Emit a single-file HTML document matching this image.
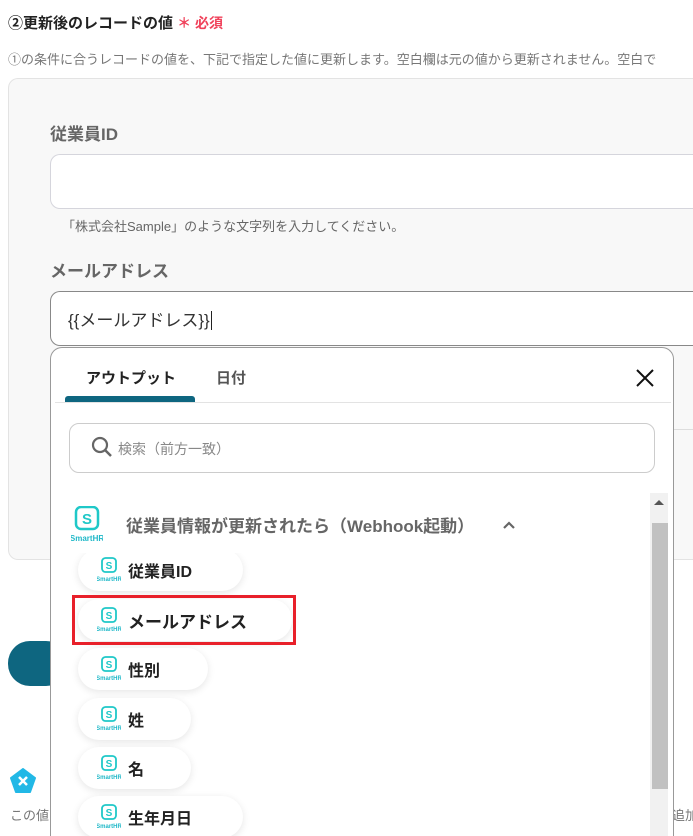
<!DOCTYPE html>
<html style="width:693px;height:836px;overflow:hidden"><head><meta charset="utf-8"><style>
*{box-sizing:border-box;margin:0;padding:0}
body{width:693px;height:836px;overflow:hidden;background:#fff;font-family:"Liberation Sans","Noto Sans CJK JP",sans-serif;position:relative}
.a{position:absolute;white-space:nowrap}
.chip{position:absolute;left:78px;height:42px;background:#fff;border-radius:21px;box-shadow:0 2px 8px rgba(0,0,0,.1);}
.chip .t{position:absolute;left:50px;top:9px;font-size:16px;font-weight:bold;color:#222}
.si{position:absolute;left:19px;top:8px;width:24px;height:26px}
</style></head><body>
<div class="a" style="left:8px;top:12px;font-size:15px;font-weight:bold;color:#222">②更新後のレコードの値 <span style="color:#f0415a;font-size:14px">＊ 必須</span></div>
<div class="a" style="left:8px;top:49px;width:685px;overflow:hidden;font-size:13px;color:#777">①の条件に合うレコードの値を、下記で指定した値に更新します。空白欄は元の値から更新されません。空白で</div>
<div class="a" style="left:8px;top:78px;width:685px;height:482px;background:#f8f8f8;border:1px solid #e3e3e3;border-right:none;border-radius:10px 0 0 10px"></div>
<div class="a" style="left:50px;top:120px;font-size:17px;font-weight:bold;color:#666">従業員ID</div>
<div class="a" style="left:50px;top:154px;width:643px;height:55px;background:#fff;border:1px solid #d5d5dc;border-right:none;border-radius:10px 0 0 10px"></div>
<div class="a" style="left:62px;top:216px;font-size:13px;color:#666">「株式会社Sample」のような文字列を入力してください。</div>
<div class="a" style="left:50px;top:257px;font-size:17px;font-weight:bold;color:#666">メールアドレス</div>
<div class="a" style="left:50px;top:291px;width:643px;height:55px;background:#fff;border:1px solid #888;border-right:none;border-radius:10px 0 0 10px"></div>
<div class="a" style="left:68px;top:306px;font-size:17px;color:#333">{{メールアドレス}}<span style="border-left:1px solid #222;margin-left:1px"></span></div>
<div class="a" style="left:674px;top:429px;width:19px;border-top:1px solid #ddd"></div>
<div class="a" style="left:8px;top:641px;width:60px;height:45px;background:#0e6680;border-radius:22px"></div>
<svg class="a" style="left:10px;top:768px" width="26" height="26" viewBox="0 0 26 26"><polygon points="13,1 25,10 20,24 6,24 1,10" fill="#22b8e6" stroke="#22b8e6" stroke-linejoin="round" stroke-width="2"/><path d="M9 9l8 8M17 9l-8 8" stroke="#fff" stroke-width="2.5"/></svg>
<div class="a" style="left:10px;top:805px;font-size:13px;color:#777">この値</div>
<div class="a" style="left:672px;top:805px;width:21px;overflow:hidden;font-size:13px;color:#777">追加</div>
<div class="a" style="left:50px;top:347px;width:624px;height:489px;background:#fff;border:1px solid #999;border-bottom:none;border-radius:12px 12px 0 0;overflow:hidden">
 <div class="a" style="left:35px;top:19px;font-size:15px;font-weight:bold;color:#222">アウトプット</div>
 <div class="a" style="left:165px;top:19px;font-size:15px;font-weight:bold;color:#555">日付</div>
 <div class="a" style="left:14px;top:48px;width:130px;height:6px;background:#0e6680;border-radius:3px 3px 0 0"></div>
 <div class="a" style="left:4px;top:54px;width:616px;border-top:1px solid #e3e3e3"></div>
 <svg class="a" style="left:584px;top:20px" width="20" height="20" viewBox="0 0 20 20"><path d="M2 2l16 16M18 2L2 18" stroke="#111" stroke-width="2"/></svg>
 <div class="a" style="left:18px;top:75px;width:586px;height:50px;border:1px solid #ccc;border-radius:10px"></div>
 <svg class="a" style="left:40px;top:88px" width="22" height="22" viewBox="0 0 22 22"><circle cx="9" cy="9" r="7" fill="none" stroke="#666" stroke-width="2.2"/><path d="M14 14l6 6" stroke="#666" stroke-width="2.5"/></svg>
 <div class="a" style="left:67px;top:91px;font-size:14px;color:#888">検索（前方一致）</div>
 <svg class="a" style="left:20px;top:158px" width="32" height="38" viewBox="0 0 32 38"><rect x="5" y="1" width="22" height="22" rx="5" fill="none" stroke="#1fc8c8" stroke-width="2.5"/><text x="16" y="18" font-size="15" font-weight="bold" text-anchor="middle" fill="#1fc8c8" font-family="Liberation Sans">S</text><text x="16" y="35" font-size="8" font-weight="bold" text-anchor="middle" fill="#1fb8c8" font-family="Liberation Sans">SmartHR</text></svg>
 <div class="a" style="left:75px;top:164px;font-size:17px;font-weight:bold;color:#666">従業員情報が更新されたら（Webhook起動）</div>
 <svg class="a" style="left:451px;top:172px" width="14" height="10" viewBox="0 0 14 10"><path d="M2 8l5-5 5 5" fill="none" stroke="#666" stroke-width="2.2"/></svg>
 <div class="a" style="left:599px;top:145px;width:18px;height:344px;background:#f1f1f1"></div>
 <div class="a" style="left:601px;top:175px;width:16px;height:266px;background:#c1c1c1"></div>
 <div class="a" style="left:603px;top:152px;width:0;height:0;border-left:5px solid transparent;border-right:5px solid transparent;border-bottom:5px solid #555"></div>
</div>
<div class="a" style="left:50px;top:553px;width:598px;height:283px;overflow:hidden">
 <div class="chip" style="left:28px;top:-4px;width:165px"><svg class="si" viewBox="0 0 24 26"><rect x="5" y="1" width="14" height="14" rx="3.5" fill="none" stroke="#1fc8c8" stroke-width="1.8"/><text x="12" y="12" font-size="10" font-weight="bold" text-anchor="middle" fill="#1fc8c8" font-family="Liberation Sans">S</text><text x="12" y="24" font-size="6" font-weight="bold" text-anchor="middle" fill="#1fb8c8" font-family="Liberation Sans">SmartHR</text></svg><div class="t">従業員ID</div></div>
 <div class="chip" style="left:28px;top:46px;width:214px"><svg class="si" viewBox="0 0 24 26"><rect x="5" y="1" width="14" height="14" rx="3.5" fill="none" stroke="#1fc8c8" stroke-width="1.8"/><text x="12" y="12" font-size="10" font-weight="bold" text-anchor="middle" fill="#1fc8c8" font-family="Liberation Sans">S</text><text x="12" y="24" font-size="6" font-weight="bold" text-anchor="middle" fill="#1fb8c8" font-family="Liberation Sans">SmartHR</text></svg><div class="t" style="font-size:17px">メールアドレス</div></div>
 <div class="chip" style="left:28px;top:95px;width:130px"><svg class="si" viewBox="0 0 24 26"><rect x="5" y="1" width="14" height="14" rx="3.5" fill="none" stroke="#1fc8c8" stroke-width="1.8"/><text x="12" y="12" font-size="10" font-weight="bold" text-anchor="middle" fill="#1fc8c8" font-family="Liberation Sans">S</text><text x="12" y="24" font-size="6" font-weight="bold" text-anchor="middle" fill="#1fb8c8" font-family="Liberation Sans">SmartHR</text></svg><div class="t">性別</div></div>
 <div class="chip" style="left:28px;top:145px;width:113px"><svg class="si" viewBox="0 0 24 26"><rect x="5" y="1" width="14" height="14" rx="3.5" fill="none" stroke="#1fc8c8" stroke-width="1.8"/><text x="12" y="12" font-size="10" font-weight="bold" text-anchor="middle" fill="#1fc8c8" font-family="Liberation Sans">S</text><text x="12" y="24" font-size="6" font-weight="bold" text-anchor="middle" fill="#1fb8c8" font-family="Liberation Sans">SmartHR</text></svg><div class="t">姓</div></div>
 <div class="chip" style="left:28px;top:194px;width:113px"><svg class="si" viewBox="0 0 24 26"><rect x="5" y="1" width="14" height="14" rx="3.5" fill="none" stroke="#1fc8c8" stroke-width="1.8"/><text x="12" y="12" font-size="10" font-weight="bold" text-anchor="middle" fill="#1fc8c8" font-family="Liberation Sans">S</text><text x="12" y="24" font-size="6" font-weight="bold" text-anchor="middle" fill="#1fb8c8" font-family="Liberation Sans">SmartHR</text></svg><div class="t">名</div></div>
 <div class="chip" style="left:28px;top:243px;width:165px"><svg class="si" viewBox="0 0 24 26"><rect x="5" y="1" width="14" height="14" rx="3.5" fill="none" stroke="#1fc8c8" stroke-width="1.8"/><text x="12" y="12" font-size="10" font-weight="bold" text-anchor="middle" fill="#1fc8c8" font-family="Liberation Sans">S</text><text x="12" y="24" font-size="6" font-weight="bold" text-anchor="middle" fill="#1fb8c8" font-family="Liberation Sans">SmartHR</text></svg><div class="t">生年月日</div></div>
</div>
<div class="a" style="left:72px;top:595px;width:224px;height:50px;border:3px solid #e8202a"></div>
</body></html>
